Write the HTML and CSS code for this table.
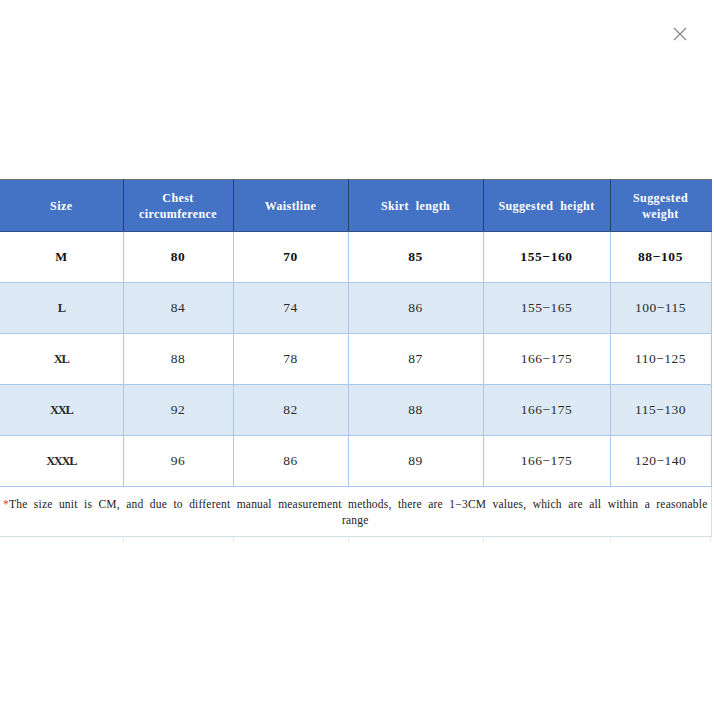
FILE: index.html
```html
<!DOCTYPE html>
<html>
<head>
<meta charset="utf-8">
<link rel="stylesheet" href="styles.css">
</head>
<body>
<div class="page">
  <button class="close" aria-label="close">
    <svg width="14" height="14" viewBox="0 0 14 14"><path d="M1 1L13 13M13 1L1 13" stroke="#8a8a8a" stroke-width="1.3" fill="none"/></svg>
  </button>
  <table class="size-table">
    <colgroup>
      <col class="c1"><col class="c2"><col class="c3"><col class="c4"><col class="c5"><col class="c6">
    </colgroup>
    <thead>
      <tr>
        <th>Size</th>
        <th>Chest<br>circumference</th>
        <th>Waistline</th>
        <th>Skirt&nbsp; length</th>
        <th>Suggested&nbsp; height</th>
        <th>Suggested<br>weight</th>
      </tr>
    </thead>
    <tbody>
      <tr class="bold"><td class="sz">M</td><td>80</td><td>70</td><td>85</td><td>155−160</td><td>88−105</td></tr>
      <tr class="alt"><td class="sz">L</td><td>84</td><td>74</td><td>86</td><td>155−165</td><td>100−115</td></tr>
      <tr><td class="sz">XL</td><td>88</td><td>78</td><td>87</td><td>166−175</td><td>110−125</td></tr>
      <tr class="alt"><td class="sz">XXL</td><td>92</td><td>82</td><td>88</td><td>166−175</td><td>115−130</td></tr>
      <tr><td class="sz">XXXL</td><td>96</td><td>86</td><td>89</td><td>166−175</td><td>120−140</td></tr>
      <tr class="note-row"><td colspan="6" class="note-cell"><div class="note"><span class="star">*</span>The size unit is CM, and due to different manual measurement methods, there are 1−3CM values, which are all within a reasonable range</div></td></tr>
    </tbody>
  </table>
  <div class="stubs">
    <span class="s1"></span><span class="s2"></span><span class="s3"></span><span class="s4"></span><span class="s5"></span><span class="s6"></span>
  </div>
</div>
</body>
</html>
```

FILE: styles.css
```css
html, body {
  margin: 0;
  padding: 0;
  background: #ffffff;
}
.page {
  position: relative;
  width: 714px;
  height: 714px;
  padding-top: 179px;
  box-sizing: border-box;
  font-family: "Liberation Serif", "Noto Sans CJK SC", serif;
}
.close {
  position: absolute;
  top: 27px;
  left: 673px;
  width: 14px;
  height: 14px;
  padding: 0;
  border: 0;
  background: none;
  display: block;
}
.close svg { display: block; }
.size-table {
  border-collapse: collapse;
  table-layout: fixed;
  width: 711px;
  color: #222;
}
.c1 { width: 123px; }
.c2 { width: 110px; }
.c3 { width: 115px; }
.c4 { width: 135px; }
.c5 { width: 127px; }
.c6 { width: 101px; }
.size-table th {
  background: #4472c4;
  color: #ffffff;
  font-weight: bold;
  font-size: 12px;
  line-height: 16px;
  letter-spacing: 0.4px;
  height: 51px;
  padding: 0;
  border-top: 1px solid #6b6f78;
  border-bottom: 1px solid #2f4f86;
  border-left: 1px solid #26406e;
  border-right: 1px solid #26406e;
  text-align: center;
  vertical-align: middle;
}
.size-table th:first-child { border-left: 0; }
.size-table th:last-child { border-right: 1px solid #6b6f78; }
.size-table td {
  height: 50px;
  padding: 0;
  border: 1px solid #a9c8ea;
  text-align: center;
  vertical-align: middle;
  font-size: 13.5px;
  letter-spacing: 0.5px;
  color: #2a2a2a;
}
.size-table td:first-child { border-left: 0; }
.size-table tr.alt td { background: #ddeaf6; }
.size-table tr.bold td { font-weight: bold; color: #111; letter-spacing: 0.6px; }
.size-table td.sz { font-weight: bold; letter-spacing: -1.3px; font-size: 12.5px; }
.size-table tr.bold td.sz { letter-spacing: 0; }
.size-table tr.note-row td {
  height: 49px;
  vertical-align: top;
  text-align: left;
  letter-spacing: 0;
  border-bottom: 1px solid #d6dfe9;
  border-right: 1px solid #d6dfe9;
}
.note {
  font-size: 11.5px;
  line-height: 16px;
  text-align: justify;
  text-align-last: center;
  padding: 9px 3px 0 3px;
  color: #222;
  word-spacing: 2.5px;
  letter-spacing: 0.2px;
}
.star { color: #e04040; }
.stubs {
  position: relative;
  height: 5px;
  width: 711px;
}
.stubs span {
  position: absolute;
  top: 0;
  width: 1px;
  height: 5px;
  background: #e3e9f0;
}
.s1 { left: 123px; }
.s2 { left: 233px; }
.s3 { left: 348px; }
.s4 { left: 483px; }
.s5 { left: 610px; }
.s6 { left: 710px; }
```
